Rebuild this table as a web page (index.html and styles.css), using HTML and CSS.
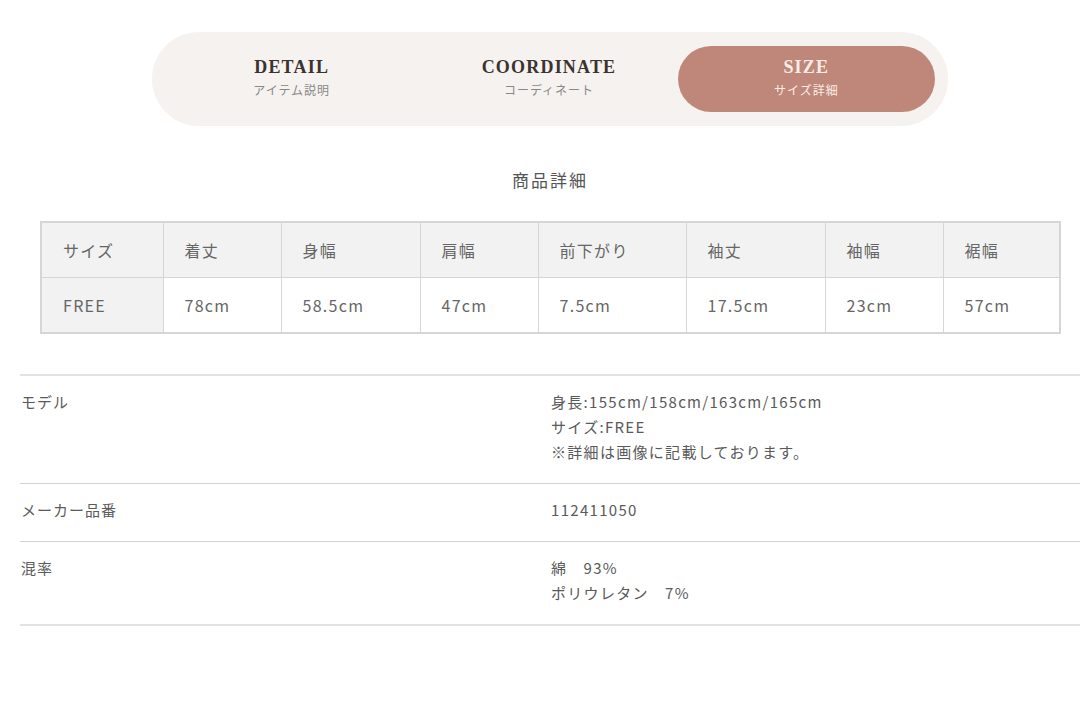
FILE: index.html
```html
<!DOCTYPE html>
<html lang="ja">
<head>
<meta charset="utf-8">
<link rel="stylesheet" href="styles.css">
</head>
<body>
<div class="page">
  <nav class="tabs">
    <a class="tab"><span class="tab-en">DETAIL</span><span class="tab-ja">アイテム説明</span></a>
    <a class="tab"><span class="tab-en">COORDINATE</span><span class="tab-ja">コーディネート</span></a>
    <a class="tab active"><span class="tab-en">SIZE</span><span class="tab-ja">サイズ詳細</span></a>
  </nav>

  <h2 class="section-title">商品詳細</h2>

  <div class="table-wrap">
    <table class="size-table">
      <colgroup>
        <col class="c1"><col class="c2"><col class="c3"><col class="c4">
        <col class="c5"><col class="c6"><col class="c7"><col>
      </colgroup>
      <tr class="head">
        <th>サイズ</th><th>着丈</th><th>身幅</th><th>肩幅</th><th>前下がり</th><th>袖丈</th><th>袖幅</th><th>裾幅</th>
      </tr>
      <tr>
        <th>FREE</th><td>78cm</td><td>58.5cm</td><td>47cm</td><td>7.5cm</td><td>17.5cm</td><td>23cm</td><td>57cm</td>
      </tr>
    </table>
  </div>

  <dl class="spec">
    <div class="spec-row">
      <dt>モデル</dt>
      <dd>身長:155cm/158cm/163cm/165cm<br>サイズ:FREE<br>※詳細は画像に記載しております。</dd>
    </div>
    <div class="spec-row">
      <dt>メーカー品番</dt>
      <dd>112411050</dd>
    </div>
    <div class="spec-row">
      <dt>混率</dt>
      <dd>綿　93%<br>ポリウレタン　7%</dd>
    </div>
  </dl>
</div>
</body>
</html>
```
FILE: styles.css
```css
html, body {
  margin: 0;
  padding: 0;
  background: #ffffff;
}
body {
  font-family: "Noto Sans CJK JP", "Noto Sans", sans-serif;
  color: #666;
}
.page {
  margin-left: 20px;
  width: 1080px;
  padding-top: 32px;
}
.tabs {
  display: flex;
  width: 772px;
  margin-left: 132px;
  padding: 14px 13px 14px 11px;
  background: #f6f2f0;
  border-radius: 47px;
}
.tab {
  flex: 1;
  height: 66px;
  box-sizing: border-box;
  padding-bottom: 3px;
  display: flex;
  flex-direction: column;
  align-items: center;
  justify-content: center;
  border-radius: 33px;
  gap: 3px;
}
.tab-en {
  font-family: "Liberation Serif", "DejaVu Serif", serif;
  font-size: 18px;
  font-weight: bold;
  letter-spacing: 1.2px;
  color: #3a3330;
  line-height: 22px;
}
.tab-ja {
  font-size: 12px;
  letter-spacing: 1px;
  color: #888;
  line-height: 18px;
}
.tab.active {
  background: #bf8779;
}
.tab.active .tab-en,
.tab.active .tab-ja {
  color: #fbeee9;
}
.section-title {
  margin: 41px 0 0;
  width: 1060px;
  text-align: center;
  font-size: 17px;
  font-weight: normal;
  letter-spacing: 2px;
  color: #555;
  line-height: 26px;
}
.table-wrap {
  margin: 28px 0 0 20px;
  width: 1021px;
}
.size-table {
  width: 1021px;
  border-collapse: collapse;
  table-layout: fixed;
  border: 2px solid #d6d6d6;
}
.c1 { width: 122px; }
.c2 { width: 118px; }
.c3 { width: 139px; }
.c4 { width: 118px; }
.c5 { width: 148px; }
.c6 { width: 139px; }
.c7 { width: 118px; }
.size-table th,
.size-table td {
  height: 54px;
  padding: 0 0 0 21px;
  border: 1px solid #d6d6d6;
  text-align: left;
  font-weight: normal;
  font-size: 16px;
  letter-spacing: 1.3px;
  color: #666;
}
.size-table th {
  background: #f2f2f2;
}
.size-table td {
  background: #fff;
}
.spec {
  margin: 40px 0 0;
  width: 1060px;
  border-top: 2px solid #e2e2e2;
  border-bottom: 2px solid #e2e2e2;
}
.spec-row {
  display: flex;
  padding: 13px 0 19px;
  border-top: 1px solid #d2d2d2;
  font-size: 15px;
  line-height: 25px;
  letter-spacing: 1px;
  color: #5a5a5a;
}
.spec-row:first-child {
  border-top: none;
}
.spec-row dt {
  width: 530px;
  padding-left: 1px;
}
.spec-row dd {
  margin: 0;
  letter-spacing: 1.3px;
}
```
